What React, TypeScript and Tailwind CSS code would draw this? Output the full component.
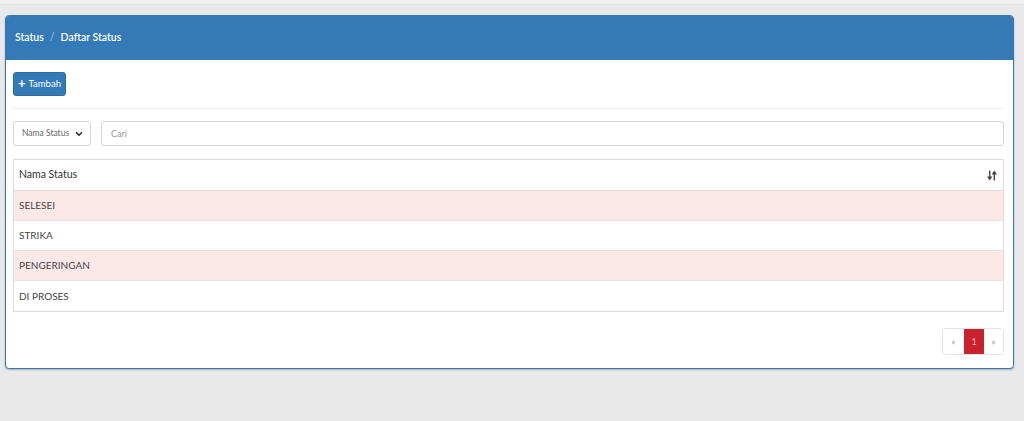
import { ChevronDown } from "lucide-react";

const rows = ["SELESEI", "STRIKA", "PENGERINGAN", "DI PROSES"];

function SortIcon() {
  return (
    <svg width="10" height="11" viewBox="0 0 10 11" fill="#444">
      <rect x="2" y="0.5" width="1.4" height="8" />
      <path d="M0 6.5 L5.4 6.5 L2.7 10.5 Z" />
      <rect x="6.6" y="2.5" width="1.4" height="8" />
      <path d="M4.6 4.5 L10 4.5 L7.3 0.5 Z" />
    </svg>
  );
}

export default function App() {
  return (
    <div
      className="w-[1024px] h-[421px] bg-[#e9e9e9] text-[#333] overflow-hidden"
      style={{ fontFamily: "Lato, 'Open Sans', sans-serif" }}
    >
      <div className="h-[5px] bg-[#f2f2f2] border-b border-[#e2e2e2]" />
      <div className="pl-[5px] pr-[10px] pt-[10px]">
        <div className="bg-white border border-[#337ab7] rounded-[4px] shadow-[0_1px_2px_rgba(0,0,0,0.25)] overflow-hidden">
          <div className="h-[44px] bg-[#337ab7] flex items-center pl-[9px] text-white text-[10.5px] font-semibold">
            <span>Status</span>
            <span className="mx-[6px] text-[#a9c7e4] font-normal">/</span>
            <span>Daftar Status</span>
          </div>
          <div className="pl-[7px] pr-[9px] pt-[12px] pb-[13px]">
            <button className="h-[24px] w-[53px] bg-[#337ab7] rounded-[3px] border border-[#2e6da4] text-white text-[9.5px] flex items-center justify-center gap-[3px]">
              <span className="text-[13px] font-bold leading-none -mt-[1px]">+</span>
              <span>Tambah</span>
            </button>
            <div className="h-px bg-[#eeeeee] mt-[12px] mb-[12px]" />
            <div className="flex gap-[10px]">
              <div className="w-[78px] h-[25px] border border-[#d5d5d5] rounded-[3px] flex items-center justify-between pl-[8px] pr-[6px] text-[8.5px] text-[#666]">
                <span>Nama Status</span>
                <ChevronDown size={10} strokeWidth={4} color="#333" />
              </div>
              <div className="flex-1 h-[25px] border border-[#d5d5d5] rounded-[3px] flex items-center pl-[9px] text-[9px] text-[#999]">
                Cari
              </div>
            </div>
            <div className="mt-[13px] border border-[#dddddd]">
              <div className="h-[31px] flex items-center justify-between pl-[5px] pr-[6px] text-[10.5px] text-[#333] border-b border-[#dddddd]">
                <span>Nama Status</span>
                <SortIcon />
              </div>
              {rows.map((r, i) => (
                <div
                  key={r}
                  className={
                    "h-[30px] flex items-center pl-[5px] text-[10px] text-[#444] " +
                    (i % 2 === 0 ? "bg-[#fde8e8] " : "bg-white ") +
                    (i < rows.length - 1 ? "border-b border-[#e4e4e4]" : "")
                  }
                >
                  {r}
                </div>
              ))}
            </div>
            <div className="flex justify-end mt-[16px]">
              <div className="flex h-[27px] border border-[#e3e3e3] rounded-[3px] overflow-hidden text-[9px]">
                <div className="w-[21px] flex items-center justify-center text-[#999] bg-white">«</div>
                <div className="w-[20px] flex items-center justify-center text-[#f3b4b4] bg-[#c9212d]">1</div>
                <div className="w-[19px] flex items-center justify-center text-[#999] bg-white">»</div>
              </div>
            </div>
          </div>
        </div>
      </div>
    </div>
  );
}
